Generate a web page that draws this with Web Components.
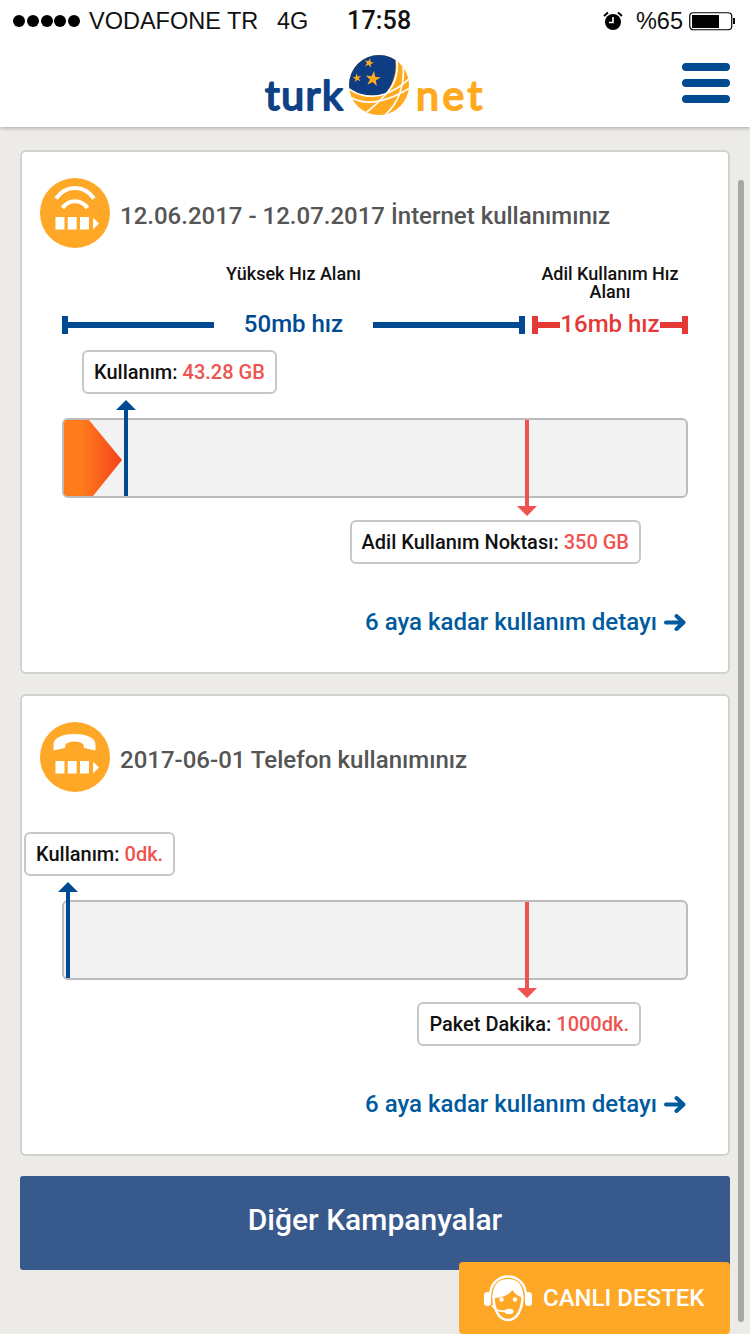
<!DOCTYPE html>
<html lang="tr">
<head>
<meta charset="utf-8">
<title>TurkNet</title>
<style>
html,body{margin:0;padding:0;background:#ecebe7;font-family:Roboto,"Liberation Sans",sans-serif;}
body{width:750px;height:1334px;overflow:hidden;position:relative;}
main{display:flex;flex-direction:column;gap:20px;padding:23px 20px 0;}
</style>
</head>
<body>
<status-bar></status-bar>
<site-header></site-header>
<main>
  <usage-card title="12.06.2017 - 12.07.2017 İnternet kullanımınız" icon="wifi">
    <speed-scale></speed-scale>
    <usage-meter style="--meter-top:16px" tip-left="20" used-x="60" fill="1" label="Kullanım:" value="43.28 GB" limit-label="Adil Kullanım Noktası:" limit-value="350 GB"></usage-meter>
  </usage-card>
  <usage-card title="2017-06-01 Telefon kullanımınız" icon="phone">
    <usage-meter style="--meter-top:40px" tip-left="-38" used-x="2" label="Kullanım:" value="0dk." limit-label="Paket Dakika:" limit-value="1000dk."></usage-meter>
  </usage-card>
  <cta-button>Diğer Kampanyalar</cta-button>
</main>
<chat-button>CANLI DESTEK</chat-button>
<page-scrollbar></page-scrollbar>
<script>
function def(name, html){
  customElements.define(name, class extends HTMLElement{
    connectedCallback(){
      if(this.shadowRoot) return;
      const r=this.attachShadow({mode:'open'});
      r.innerHTML = typeof html==='function'?html(this):html;
    }
  });
}
def('status-bar',`<style>
:host{display:flex;align-items:center;height:42px;background:#fff;font:400 23.5px/42px "Liberation Sans",Arial,sans-serif;color:#111;position:relative;z-index:2;padding:0 15px 0 13px;box-sizing:border-box;}
.dots{display:flex;gap:1.800px;width:76px}.dots i{width:12px;height:12px;border-radius:50%;background:#000;display:block}
.car{width:188px;white-space:nowrap}.net{width:70px}.time{font:500 25px/42px Roboto,sans-serif;letter-spacing:.2px;flex:1}
.r{display:flex;align-items:center}
.pc{margin:0 6px 0 13px}
</style>
<span class="dots"><i></i><i></i><i></i><i></i><i></i></span><span class="car">VODAFONE TR</span><span class="net">4G</span><span class="time">17:58</span>
<span class="r"><svg width="20" height="20" viewBox="0 0 20 20"><circle cx="10" cy="11" r="8" fill="#000"/><path d="M10 6v5.500H6" fill="none" stroke="#fff" stroke-width="1.600"/><path d="M1 5 5 1.500M19 5 15 1.500" stroke="#000" stroke-width="2" fill="none"/></svg><span class="pc">%65</span>
<svg width="46" height="20" viewBox="0 0 46 20"><rect x=".75" y="1.750" width="42" height="17" rx="3.500" fill="#fff" stroke="#000" stroke-width="1.200"/><rect x="3" y="4" width="27" height="13" fill="#000"/><path d="M44 7h2v6h-2z" fill="#000"/></svg></span>`);
const STAR='M0-1 .24-.31 .95-.31 .38 .12 .59 .81 0 .38-.59 .81-.38 .12-.95-.31-.24-.31Z';
def('site-header',`<style>
:host{display:grid;grid-template-columns:1fr auto 1fr;align-items:center;height:85px;background:#fff;box-shadow:0 1px 4px rgba(0,0,0,.3);position:relative;z-index:1}
svg{display:block}
.m{justify-self:end;display:flex;flex-direction:column;gap:8px;padding-right:20px;margin-top:-3px}
.m i{display:block;width:48px;height:8px;border-radius:4px;background:#004a92}
</style><span></span>
<svg width="224" height="72" viewBox="-2 -5 224 72">
<text x="0" y="56" font-family="Lato" font-weight="400" font-size="41" letter-spacing="1.500" fill="#0f4187" stroke="#0f4187" stroke-width="2" stroke-linejoin="round">turk</text>
<text x="151" y="56" font-family="Lato" font-weight="400" font-size="41" letter-spacing="3.500" fill="#ffa91f" stroke="#ffa91f" stroke-width="2" stroke-linejoin="round">net</text>
<g transform="translate(84 1)">
<clipPath id="g"><circle cx="30" cy="30" r="30"/></clipPath>
<g clip-path="url(#g)">
<rect width="60" height="60" fill="#ffa91f"/>
<path d="M-2-2H45C49 12 46 27 36 39 24 42 10 41-1 33Z" fill="#0f3d84"/>
<g fill="none" stroke="#fff" stroke-width="1.700">
<path d="M46-1C51 13 47 29 37 39 30 47 22 54 14 60"/>
<path d="M-1 33C10 42 24 43 36 39 45 36 54 30 62 22"/>
<path d="M3 43C18 51 38 47 61 33"/>
<path d="M36 60C50 48 56 28 54 12"/>
</g></g>
<g fill="#ffa91f">
<path d="${STAR}" transform="translate(24 24) rotate(8) scale(8)"/>
<path d="${STAR}" transform="translate(20 8) rotate(14) scale(5)"/>
<path d="${STAR}" transform="translate(8 23) rotate(-8) scale(4.500)"/>
</g></g></svg>
<span class="m"><i></i><i></i><i></i></span>`);
def('usage-card',h=>{
 const ph=h.getAttribute('icon')==='phone';
 return `<style>
:host{display:block;background:#fff;border:2px solid #d2d2cd;border-radius:6px;padding:26px 18px 35px;}
.h{display:flex;align-items:center;gap:10px;height:70px}
svg{display:block;flex:none}
.t{font:500 24px/30px Roboto,sans-serif;color:#555;white-space:nowrap;margin-top:6px}
</style>
<div class="h"><svg width="70" height="70" viewBox="0 0 70 70"><circle cx="35" cy="35" r="35" fill="#ffa726"/>
${ph?`<path d="M13.500 28.500V22C14 15 24 12 34.500 12S55 15 55.500 22v6.500L44 26l-.5-3.500C40 18.500 29 18.500 25.500 22.500L25 26Z" fill="#fff"/>`:
`<g fill="none" stroke="#fff" stroke-width="4"><path d="M16 20.500C26 6.500 44 6.500 54 20.500"/><path d="M22.500 30C29 21 41 21 47.500 30"/></g>`}
<g fill="#fff"><path d="M15.500 39h9v12.500h-9zM27.700 39h9v12.500h-9zM40 39h9v12.500h-9zM53 39.500l6 6-6 6z"/></g></svg>
<span class="t">${h.getAttribute('title')}</span></div>
<slot></slot><detail-link>6 aya kadar kullanım detayı</detail-link>`;});
def('speed-scale',`<style>
:host{display:grid;grid-template-columns:463px 156px;column-gap:7px;margin:17px 22px 0;font-family:Roboto,sans-serif;}
.l{font:500 18px/18px Roboto,sans-serif;color:#111;text-align:center;align-self:start;height:36px;margin-bottom:15px}
.s{display:flex;align-items:center;height:18px;font:500 24px/18px Roboto,sans-serif;white-space:nowrap}
.b{color:#004a92;--c:#004a92}.r{color:#e53935;--c:#e53935}
.ln{flex:1;height:6px;background:var(--c)}.cap{width:6px;height:18px;background:var(--c)}
.b span{padding:0 30px;margin-top:-2px}.r span{padding:0;margin-top:-2px}
</style>
<div class="l">Yüksek Hız Alanı</div><div class="l">Adil Kullanım Hız Alanı</div>
<div class="s b"><i class="cap"></i><i class="ln"></i><span>50mb hız</span><i class="ln"></i><i class="cap"></i></div>
<div class="s r"><i class="cap"></i><i class="ln"></i><span>16mb hız</span><i class="ln"></i><i class="cap"></i></div>`);
def('usage-meter',h=>{
 const a=n=>h.getAttribute(n);
 return `<style>
:host{display:block;margin:var(--meter-top,16px) 22px 0;}
.tip{display:inline-block;box-sizing:border-box;height:44px;border:2px solid #c8c8c8;border-radius:6px;background:#fff;padding:0 10px;font:500 20px/40px Roboto,sans-serif;color:#111;white-space:nowrap}
.tip b{font-weight:500;color:#ef5350}
.top{display:flex;margin-left:${a('tip-left')}px}
.bot{display:flex;justify-content:flex-end;margin-right:47px}
.bar{position:relative;box-sizing:border-box;height:80px;margin:24px 0 22px;background:#f2f2f2;border:2px solid #bcbcbc;border-radius:6px}
.fill{position:absolute;left:0;top:0;bottom:0;width:58px;background:linear-gradient(90deg,#ff7b1c 30%,#f3431a);clip-path:polygon(0 0,25px 0,58px 40px,29px 100%,0 100%);border-radius:3px 0 0 3px}
.ar{position:absolute;width:20px;height:96px}
.ar svg{display:block}
</style>
<div class="top"><span class="tip">${a('label')} <b>${a('value')}</b></span></div>
<div class="bar">
${a('fill')?'<div class="fill"></div>':''}
<div class="ar" style="left:${(+a('used-x'))-8}px;top:-20px"><svg width="20" height="96" viewBox="0 0 20 96"><path d="M10 0 20 10H12V96H8V10H0Z" fill="#004a92"/></svg></div>
<div class="ar" style="left:453px;top:0"><svg width="20" height="96" viewBox="0 0 20 96"><path d="M8 0h4V86h8L10 96 0 86h8Z" fill="#ef5350"/></svg></div>
</div>
<div class="bot"><span class="tip">${a('limit-label')} <b>${a('limit-value')}</b></span></div>`;});
def('detail-link',`<style>
:host{display:flex;justify-content:flex-end;align-items:center;gap:7px;height:30px;margin:43px 24px 0 0;font:500 24px/30px Roboto,sans-serif;color:#005a9e;white-space:nowrap}
svg{display:block}
</style><slot></slot><svg width="22" height="18" viewBox="0 0 22 18"><path d="M2 9.500H19M12.500 3l7 6.500-7 6.500" fill="none" stroke="#005a9e" stroke-width="4" stroke-linecap="round" stroke-linejoin="round"/></svg>`);
def('cta-button',`<style>
:host{display:flex;align-items:center;justify-content:center;box-sizing:border-box;height:94px;padding-bottom:6px;background:#38598c;border-radius:3px;color:#fff;font:500 30px/34px Roboto,sans-serif}
</style><slot></slot>`);
def('chat-button',`<style>
:host{position:absolute;left:459px;top:1262px;width:271px;height:72px;box-sizing:border-box;padding-left:25px;display:flex;align-items:center;gap:11px;background:#ffa726;border-radius:4px;color:#fff;font:500 24px/30px Roboto,sans-serif;white-space:nowrap;z-index:3}
svg{display:block}
</style>
<svg width="48" height="48" viewBox="0 0 48 48">
<path d="M6 22C6-4 42-4 42 22" fill="none" stroke="#fff" stroke-width="2.500"/>
<rect x="0" y="18" width="7" height="14" rx="3.500" fill="#fff"/><rect x="41" y="18" width="7" height="14" rx="3.500" fill="#fff"/>
<path d="M9.500 22C9.500 34 14 46 24 46S38.500 34 38.500 22" fill="none" stroke="#fff" stroke-width="2.500"/>
<path d="M8.500 24C8.500 8 17 5 24 5S39.500 8 39.500 24C34 22 31 20 28.500 16 25 21 17 24 8.500 24Z" fill="#fff"/>
<circle cx="17.500" cy="25.500" r="2.200" fill="#fff"/><circle cx="31" cy="25.500" r="2.200" fill="#fff"/>
<path d="M8 31C10 36 14 37.500 22 37.500" fill="none" stroke="#fff" stroke-width="1.800"/><ellipse cx="25" cy="37.500" rx="4.500" ry="2.700" fill="#fff"/>
</svg><slot></slot>`);
def('page-scrollbar',`<style>
:host{position:absolute;left:738px;top:180px;width:6px;height:1142px;background:#a8a8a3;border-radius:3px}
</style>`);
</script>
</body>
</html>
